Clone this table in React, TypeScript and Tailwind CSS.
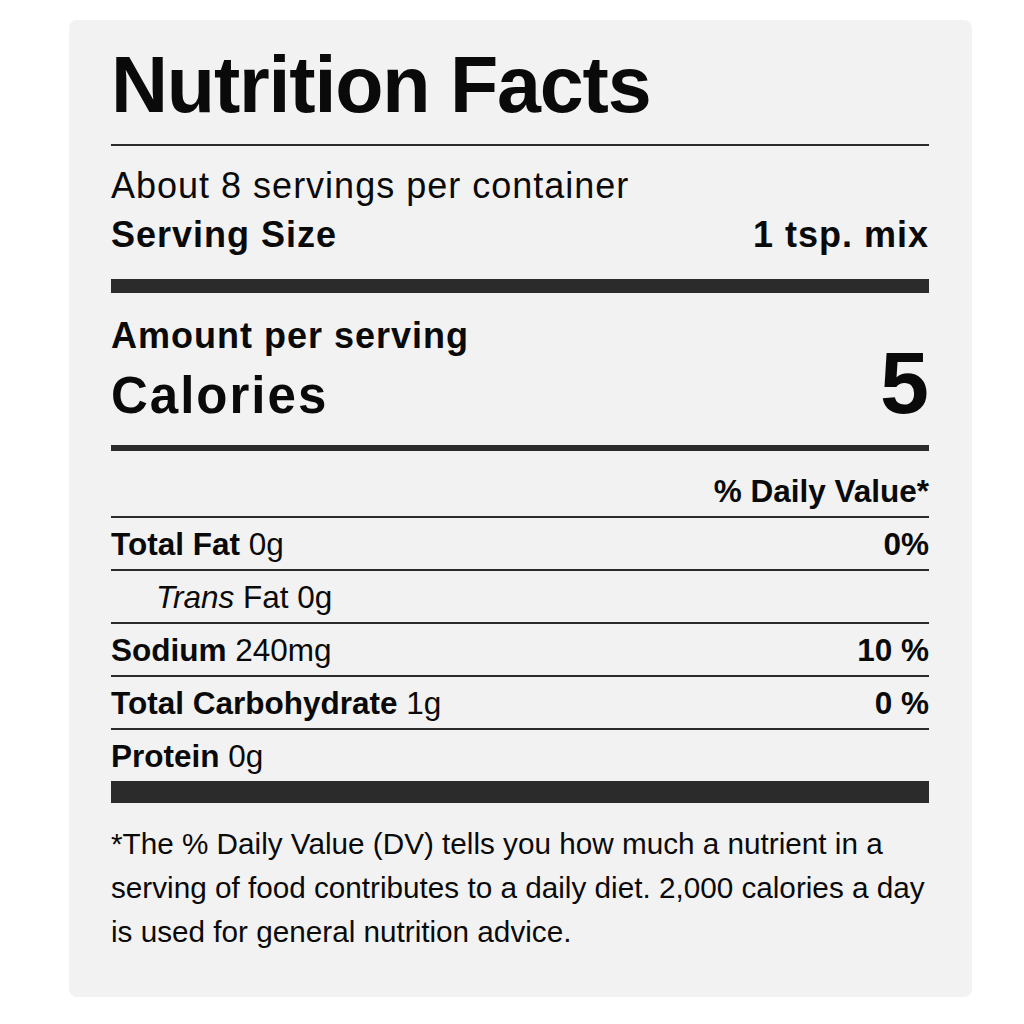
import React from 'react'

const nutrients = [
  { label: 'Total Fat', amount: '0g', dv: '0%' },
  { label: 'Trans Fat', amount: '0g', dv: '', indent: true },
  { label: 'Sodium', amount: '240mg', dv: '10 %' },
  { label: 'Total Carbohydrate', amount: '1g', dv: '0 %' },
  { label: 'Protein', amount: '0g', dv: '' }
]

const App = () => {
  return (
    <div className="min-h-screen bg-white pl-[69px] pt-[20px] font-['Liberation_Sans',Arial,sans-serif] text-[#0a0a0a]">
      <div className="w-[903px] h-[977px] rounded-lg bg-[#f2f2f2] pl-[42px] pr-[43px] pt-[25px]">
        <h1 className="text-[79px] leading-none font-bold tracking-[-1.2px]">Nutrition Facts</h1>
        <div className="mt-[20px] h-[2px] bg-[#2b2b2b]"></div>

        {/* servings */}
        <div className="mt-[15px] text-[36px] leading-[49px] tracking-[1px]">About 8 servings per container</div>
        <div className="flex justify-between text-[36px] leading-[49px] font-bold tracking-[1px]">
          <span>Serving Size</span>
          <span>1 tsp. mix</span>
        </div>
        <div className="mt-[20px] h-[14px] bg-[#2b2b2b]"></div>

        {/* calories */}
        <div className="mt-[25px] text-[36px] leading-[36px] font-bold tracking-[1px]">Amount per serving</div>
        <div className="flex items-baseline justify-between font-bold">
          <span className="text-[51px] leading-[58px] tracking-[2px]">Calories</span>
          <span className="text-[88px] leading-[58px]">5</span>
        </div>
        <div className="mt-[20px] h-[6px] bg-[#2b2b2b]"></div>

        <div className="pt-[20px] pb-[5px] text-right text-[31.5px] leading-[40px] font-bold">% Daily Value*</div>

        {nutrients.map((n, i) => (
          <div key={i} className="h-[53px] border-t-2 border-[#2b2b2b] pt-[2px] flex justify-between text-[31.5px] leading-[49px]">
            <span className={n.indent ? 'pl-[45px]' : ''}>
              {n.indent ? (
                <><i>Trans</i> Fat</>
              ) : (
                <b>{n.label}</b>
              )}{' '}
              {n.amount}
            </span>
            <b>{n.dv}</b>
          </div>
        ))}
        <div className="h-[22px] bg-[#2b2b2b]"></div>

        <p className="mt-[19px] text-[29.7px] leading-[44px] whitespace-nowrap">
          *The % Daily Value (DV) tells you how much a nutrient in a<br />
          serving of food contributes to a daily diet. 2,000 calories a day<br />
          is used for general nutrition advice.
        </p>
      </div>
    </div>
  )
}

export default App
